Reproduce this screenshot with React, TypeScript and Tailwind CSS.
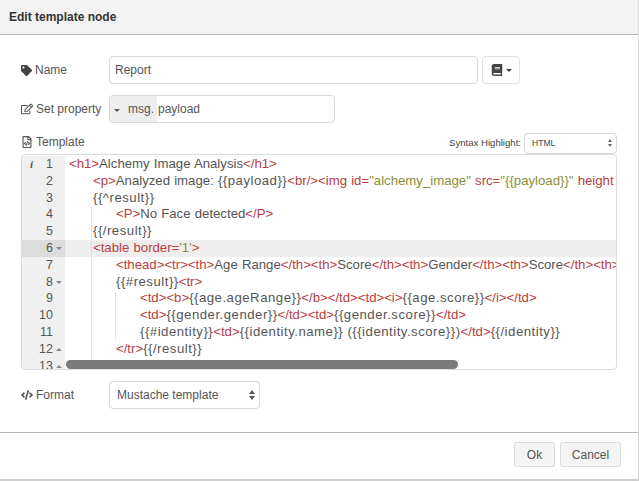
import { JSX, ReactNode } from 'react'
import { FaBook, FaCode, FaRegEdit, FaRegFileCode, FaTag } from 'react-icons/fa'

function R({ children }: { children: ReactNode }): JSX.Element {
  return <span className="text-[#b8403f]">{children}</span>
}

function S({ children }: { children: ReactNode }): JSX.Element {
  return <span className="text-[#8b8f34]">{children}</span>
}

// mustache tokens run a bit wider than the rest of the code
function M({ children }: { children: ReactNode }): JSX.Element {
  return <span className="tracking-[0.5px]">{children}</span>
}

const INDENT: Record<number, string> = {
  0: 'pl-[4px]',
  1: 'pl-[28px]',
  2: 'pl-[51px]',
  3: 'pl-[75px]'
}

interface CodeLine {
  indent: number
  fold?: 'up' | 'down'
  content?: ReactNode
}

const LINES: CodeLine[] = [
  { indent: 0, content: <><R>&lt;h1&gt;</R>Alchemy Image Analysis<R>&lt;/h1&gt;</R></> },
  {
    indent: 1,
    content: (
      <>
        <R>&lt;p&gt;</R>Analyzed image: <M>{'{{payload}}'}</M><R>&lt;br/&gt;&lt;img id=</R><S>"alchemy_image"</S> <R>src=</R>
        <S>"{'{{payload}}'}"</S> <R>height</R>
      </>
    )
  },
  { indent: 1, content: <M>{'{{^result}}'}</M> },
  { indent: 2, content: <><R>&lt;P&gt;</R>No Face detected<R>&lt;/P&gt;</R></> },
  { indent: 1, content: <M>{'{{/result}}'}</M> },
  { indent: 1, fold: 'down', content: <><R>&lt;table border=</R><S>'1'</S><R>&gt;</R></> },
  {
    indent: 2,
    content: (
      <>
        <R>&lt;thead&gt;&lt;tr&gt;&lt;th&gt;</R>Age Range<R>&lt;/th&gt;&lt;th&gt;</R>Score<R>&lt;/th&gt;&lt;th&gt;</R>Gender
        <R>&lt;/th&gt;&lt;th&gt;</R>Score<R>&lt;/th&gt;&lt;th&gt;</R>
      </>
    )
  },
  { indent: 2, fold: 'down', content: <><M>{'{{#result}}'}</M><R>&lt;tr&gt;</R></> },
  {
    indent: 3,
    content: (
      <>
        <R>&lt;td&gt;&lt;b&gt;</R><M>{'{{age.ageRange}}'}</M><R>&lt;/b&gt;&lt;/td&gt;&lt;td&gt;&lt;i&gt;</R><M>{'{{age.score}}'}</M>
        <R>&lt;/i&gt;&lt;/td&gt;</R>
      </>
    )
  },
  {
    indent: 3,
    content: (
      <>
        <R>&lt;td&gt;</R><M>{'{{gender.gender}}'}</M><R>&lt;/td&gt;&lt;td&gt;</R><M>{'{{gender.score}}'}</M><R>&lt;/td&gt;</R>
      </>
    )
  },
  {
    indent: 3,
    content: (
      <>
        <M>{'{{#identity}}'}</M><R>&lt;td&gt;</R><M>{'{{identity.name}}'}</M> <M>({'{{identity.score}}'})</M><R>&lt;/td&gt;</R><M>{'{{/identity}}'}</M>
      </>
    )
  },
  { indent: 2, fold: 'up', content: <><R>&lt;/tr&gt;</R><M>{'{{/result}}'}</M></> },
  { indent: 1, fold: 'up', content: <R>&lt;/table&gt;</R> }
]

function Label({ icon, text, className }: { icon: ReactNode; text: string; className?: string }): JSX.Element {
  return (
    <div className={`flex w-[88px] items-center gap-[3px] whitespace-nowrap text-[12px] text-[#555] ${className ?? ''}`}>
      {icon}
      <span>{text}</span>
    </div>
  )
}

function Editor(): JSX.Element {
  return (
    <div className="relative h-[216px] overflow-hidden rounded-[4px] border border-[#dcdcdc] bg-white text-[13.2px] leading-[16.8px] text-[#555] [word-spacing:0.5px]">
      <div className="pt-px">
        {LINES.map((line, i) => (
          <div key={i} className={`flex h-[16.8px] ${i === 5 ? 'bg-[#eeeeee]' : ''}`}>
            <div
              className={`relative flex w-[43px] shrink-0 justify-end pr-[12px] text-[12.5px] text-[#555] ${
                i === 5 ? 'bg-[#dcdcdc]' : 'bg-[#f0f0f0]'
              }`}
            >
              {i === 0 && <span className="absolute left-[8px] top-0 font-['Liberation_Serif',serif] text-[11px] font-bold italic">i</span>}
              <span>{i + 1}</span>
              {line.fold === 'down' && (
                <span className="absolute right-[3px] top-[7px] size-0 border-x-[3px] border-t-[3px] border-x-transparent border-t-[#888]" />
              )}
              {line.fold === 'up' && (
                <span className="absolute right-[3px] top-[7px] size-0 border-x-[3px] border-b-[3px] border-x-transparent border-b-[#888]" />
              )}
            </div>
            <div className={`whitespace-nowrap ${INDENT[line.indent]}`}>{line.content}</div>
          </div>
        ))}
      </div>
      {/* indent guides */}
      <div className="absolute left-[69px] top-[52px] h-[155px] border-l border-dotted border-[#ccc]" />
      <div className="absolute left-[93px] top-[137px] h-[48px] border-l border-dotted border-[#ccc]" />
      <div className="absolute bottom-0 left-[44px] h-[9px] w-[392px] rounded-[5px] bg-[#7b7b7b]" />
    </div>
  )
}

export default function App(): JSX.Element {
  return (
    <div className="flex h-[481px] w-[639px] flex-col border-r border-b-2 border-r-[#d8d8d8] border-b-[#cfcfcf] bg-white font-['Liberation_Sans',Arial,sans-serif] text-[#555]">
      <div className="flex h-[35px] shrink-0 items-center border-b border-[#b5b5b5] bg-[#f3f3f3] pl-[9px] text-[12px] font-bold text-[#333]">
        Edit template node
      </div>

      <div className="flex-1 pl-[21px] pr-[21px] pt-[21px]">
        <div className="flex h-[28px] items-center">
          <Label icon={<FaTag className="size-[11px] text-[#444]" />} text="Name" />
          <input
            readOnly
            value="Report"
            className="h-[28px] w-[369px] rounded-[4px] border border-[#d8d8d8] bg-white px-[5px] text-[12px] text-[#555] outline-none"
          />
          <button className="ml-[4px] flex h-[28px] w-[38px] items-center justify-center gap-[3px] rounded-[4px] border border-[#e2e2e2] bg-white text-[#444]">
            <FaBook className="size-[12px]" />
            <span className="size-0 border-x-[3px] border-t-[3px] border-x-transparent border-t-[#444]" />
          </button>
        </div>

        <div className="mt-[11px] flex h-[28px] items-center">
          <Label icon={<FaRegEdit className="size-[12px] text-[#555]" />} text="Set property" />
          <div className="flex h-[28px] w-[226px] overflow-hidden rounded-[4px] border border-[#d8d8d8] text-[12px]">
            <div className="flex w-[47px] shrink-0 items-center bg-[#eeeeee] pl-[4px]">
              <span className="mr-[8px] mt-[2px] size-0 border-x-[3.5px] border-t-[3.5px] border-x-transparent border-t-[#555]" />
              <span>msg.</span>
            </div>
            <div className="flex items-center pl-[1px]">payload</div>
          </div>
        </div>

        <div className="mt-[10px] flex h-[21px] items-center justify-between">
          <Label icon={<FaRegFileCode className="size-[12px] text-[#555]" />} text="Template" className="mb-[3px]" />
          <div className="flex items-center gap-[3px] text-[9.6px] text-[#444]">
            <span>Syntax Highlight:</span>
            <div className="relative flex h-[21px] w-[93px] items-center rounded-[4px] border border-[#d8d8d8] bg-white pl-[7px] text-[8.6px]">
              HTML
              <span className="absolute right-[4px] top-[5px] size-0 border-x-[2.5px] border-b-[3px] border-x-transparent border-b-[#666]" />
              <span className="absolute right-[4px] top-[10px] size-0 border-x-[2.5px] border-t-[3px] border-x-transparent border-t-[#666]" />
            </div>
          </div>
        </div>

        <Editor />

        <div className="mt-[11px] flex h-[28px] items-center">
          <Label icon={<FaCode className="size-[12px] text-[#555]" />} text="Format" />
          <div className="relative flex h-[28px] w-[151px] items-center rounded-[4px] border border-[#d8d8d8] bg-white pl-[7px] text-[12px]">
            Mustache template
            <span className="absolute right-[4px] top-[8px] size-0 border-x-[3px] border-b-[4px] border-x-transparent border-b-[#555]" />
            <span className="absolute right-[4px] top-[14px] size-0 border-x-[3px] border-t-[4px] border-x-transparent border-t-[#555]" />
          </div>
        </div>
      </div>

      <div className="flex h-[47px] shrink-0 items-start justify-end gap-[5px] border-t border-[#b5b5b5] pr-[17px] pt-[9px] text-[12px]">
        <button className="h-[25px] w-[41px] rounded-[2px] border border-[#dddddd] bg-[#f4f4f4] text-[#555]">Ok</button>
        <button className="h-[25px] w-[61px] rounded-[2px] border border-[#dddddd] bg-[#f4f4f4] text-[#555]">Cancel</button>
      </div>
    </div>
  )
}
